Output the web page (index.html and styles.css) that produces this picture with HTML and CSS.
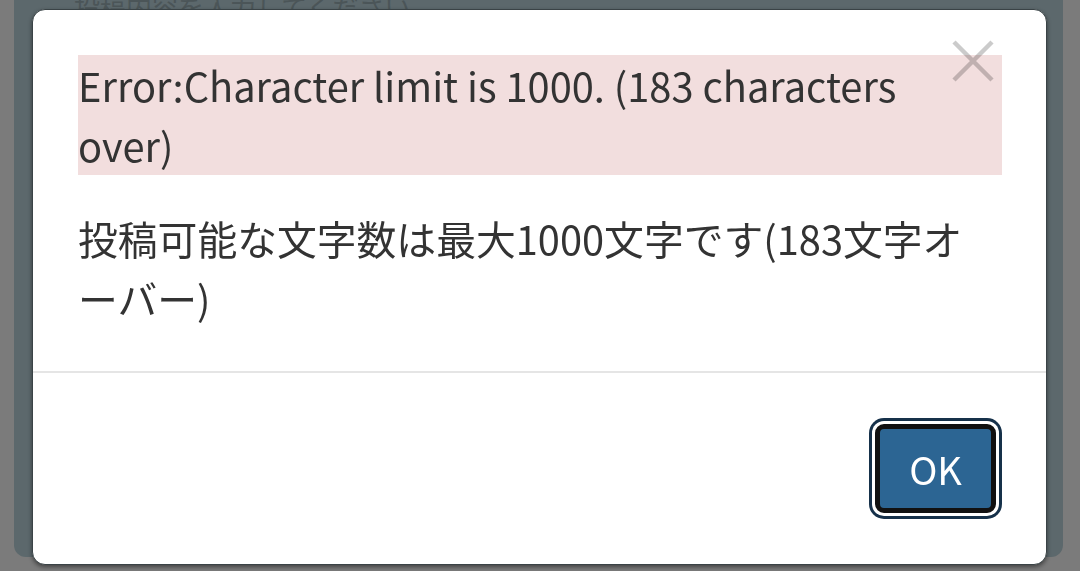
FILE: index.html
```html
<!DOCTYPE html>
<html lang="ja">
<head>
<meta charset="utf-8">
<link rel="stylesheet" href="styles.css">
</head>
<body>
<div class="page">
  <div class="page-card">
    <p class="page-text">投稿内容を入力してください</p>
  </div>
</div>
<div class="modal" role="dialog">
  <button class="close" aria-label="close">
    <svg width="42" height="42" viewBox="0 0 42 42"><path d="M2 2 L40 40 M40 2 L2 40" stroke="#000" stroke-width="4.5" fill="none"/></svg>
  </button>
  <div class="modal-body">
    <p class="error">Error:Character limit is 1000. (183 characters over)</p>
    <p class="message">投稿可能な文字数は最大1000文字です(183文字オーバー)</p>
  </div>
  <div class="modal-footer">
    <button class="ok">OK</button>
  </div>
</div>
</body>
</html>
```
FILE: styles.css
```css
html, body {
  margin: 0;
  padding: 0;
  height: 100%;
  overflow: hidden;
}
body {
  background: #7b7b7b;
  font-family: "Noto Sans CJK JP", "Noto Sans", sans-serif;
}
.page {
  height: 100%;
  padding: 0 17px 0 14px;
  box-sizing: border-box;
}
.page-card {
  height: 557px;
  background: #5c686c;
  border-radius: 0 0 12px 12px;
  overflow: hidden;
}
.page-text {
  margin: 0;
  padding: 0 0 0 60px;
  font-size: 26px;
  line-height: 14px;
  color: #4b5558;
}
.modal {
  position: fixed;
  left: 32px;
  top: 9px;
  width: 1015px;
  height: 556px;
  box-sizing: border-box;
  background: #fff;
  border: 1px solid #3a4346;
  border-radius: 13px;
  box-shadow: 0 2px 4px rgba(0,0,0,0.45);
  display: flex;
  flex-direction: column;
}
.close {
  position: absolute;
  top: 30px;
  right: 52px;
  padding: 0;
  border: 0;
  background: none;
  opacity: 0.2;
  line-height: 0;
}
.modal-body {
  padding: 45px 44px 43px 45px;
  border-bottom: 2px solid #e5e5e5;
}
.error {
  margin: 0;
  background: #f2dede;
  color: #333;
  font-size: 39.8px;
  line-height: 60px;
  padding: 0 60px 0 0;
}
.message {
  margin: 33px 0 0;
  color: #333;
  font-size: 39.8px;
  line-height: 60px;
  padding: 0;
}
.modal-footer {
  flex: 1;
  display: flex;
  justify-content: flex-end;
  align-items: flex-start;
  padding: 51px 50px 0 0;
}
.ok {
  width: 121px;
  height: 89px;
  box-sizing: border-box;
  border: 5px solid #111;
  border-radius: 9px;
  background: #2c6593;
  color: #fff;
  font-family: "Noto Sans CJK JP", "Noto Sans", sans-serif;
  font-size: 38px;
  padding: 0;
  box-shadow: 0 0 0 3px #fff, 0 0 0 6px #16314a;
}
```
